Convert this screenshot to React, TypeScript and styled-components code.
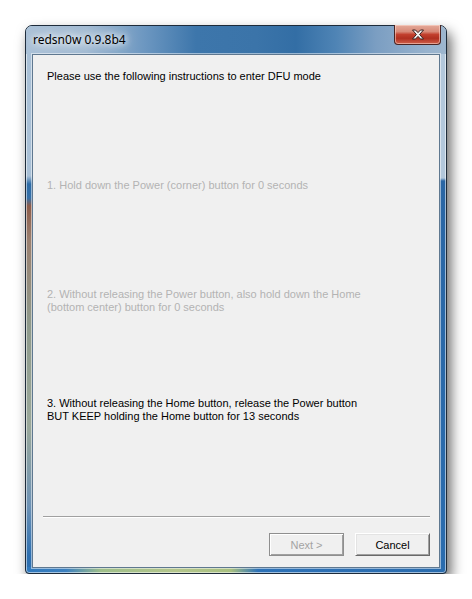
import React from 'react'
import styled, { createGlobalStyle } from 'styled-components'

const GlobalStyle = createGlobalStyle`
  html, body {
    margin: 0;
    background: #ffffff;
  }
  body {
    font-family: "Liberation Sans", Arial, sans-serif;
  }
`

const Window = styled.div`
  margin: 25px 0 0 25px;
  width: 422px;
  height: 549px;
  box-sizing: border-box;
  display: flex;
  flex-direction: column;
  border: 1px solid #1d2b3a;
  border-radius: 7px 7px 4px 4px;
  box-shadow: 4px 7px 13px rgba(0, 0, 0, 0.6), inset 0 0 0 1px rgba(255, 255, 255, 0.55);
  background:
    linear-gradient(90deg, #2f78bd 0, #3c80bf 40px, #9fbf8a 75px, #b4c68c 150px, #a8c080 205px, #2d72b8 232px, #2a6cae 100%) left bottom / 100% 6px no-repeat,
    linear-gradient(180deg, #a9c0d6 0, #a9c0d6 150px, #2e6ca6 158px, #3570a8 172px, #8c5c4a 180px, #9a8070 215px, #8e9a8c 300px, #9aa89a 400px, #6d92b5 480px, #2d6fb0 530px) left top / 7px 100% no-repeat,
    linear-gradient(180deg, #b2c7db 0, #b2c7db 152px, #2a66a4 155px, #2a6cae 100%) right top / 7px 100% no-repeat,
    #5f8fbf;
`

const TitleBar = styled.div`
  height: 28px;
  flex: none;
  display: flex;
  align-items: flex-start;
  padding: 0 5px 0 7px;
  border-radius: 6px 6px 0 0;
  background:
    linear-gradient(90deg, #aac1d7 0, #a2bbd3 60px, #6b96c0 120px, #3d76ab 170px, #3b74a9 230px, #336ea5 270px, #4f84b5 310px, #7b9ec2 350px, #97b2cd 400px, #9db6ce 100%);
`

const Title = styled.div`
  height: 28px;
  line-height: 28px;
  font-family: "Noto Sans", "Liberation Sans", sans-serif;
  font-size: 12px;
  color: #000;
  padding: 0 6px 0 0;
  text-shadow: 0 0 6px #ffffff, 0 0 10px rgba(255, 255, 255, 0.9), 0 0 14px rgba(255, 255, 255, 0.8);
`

const CloseButton = styled.div`
  margin-left: auto;
  margin-top: -1px;
  width: 47px;
  height: 20px;
  box-sizing: border-box;
  display: flex;
  align-items: center;
  justify-content: center;
  border: 1px solid #4a2422;
  border-top: none;
  border-radius: 0 0 4px 4px;
  box-shadow: inset 0 0 0 1px rgba(255, 220, 210, 0.55);
  background: linear-gradient(180deg, #e4aa9a 0, #d88a78 35%, #c2402e 50%, #b03020 70%, #d0604a 100%);
`

const Client = styled.div`
  flex: 1;
  margin: 0 6px 5px 6px;
  display: flex;
  flex-direction: column;
  background: #f0f0f0;
  border: 1px solid #5f7890;
  box-shadow: 0 0 0 1px rgba(255, 255, 255, 0.5);
`

const Instructions = styled.div`
  padding: 15px 14px 0 14px;
  display: flex;
  flex-direction: column;
`

const Step = styled.div<{ $disabled?: boolean }>`
  height: 109px;
  font-size: 11px;
  line-height: 13px;
  color: ${(p) => (p.$disabled ? '#b3b3b3' : '#000000')};
`

const Footer = styled.div`
  margin-top: auto;
  padding: 0 9px 11px 10px;
  display: flex;
  flex-direction: column;
`

const Separator = styled.div`
  height: 0;
  border-top: 1px solid #a0a0a0;
  border-bottom: 1px solid #ffffff;
  margin-bottom: 15px;
`

const ButtonRow = styled.div`
  display: flex;
  justify-content: flex-end;
  gap: 11px;
`

const Button = styled.div<{ $disabled?: boolean }>`
  width: 75px;
  height: 23px;
  box-sizing: border-box;
  display: flex;
  align-items: center;
  justify-content: center;
  font-size: 11px;
  background: #f0f0f0;
  color: ${(p) => (p.$disabled ? '#a3a3a3' : '#000000')};
  border: 1px solid ${(p) => (p.$disabled ? '#8f8f8f' : '#ffffff')};
  border-right-color: ${(p) => (p.$disabled ? '#8f8f8f' : '#696969')};
  border-bottom-color: ${(p) => (p.$disabled ? '#8f8f8f' : '#696969')};
  box-shadow: ${(p) =>
    p.$disabled
      ? 'inset 1px 1px #ffffff, inset -1px -1px #a0a0a0'
      : 'inset 1px 1px #e3e3e3, inset -1px -1px #a0a0a0'};
`

function CloseGlyph() {
  return (
    <svg width="14" height="11" viewBox="0 0 14 11">
      <path
        d="M1.5 1 H4.5 L7 3.6 L9.5 1 H12.5 L8.6 5.5 L12.5 10 H9.5 L7 7.4 L4.5 10 H1.5 L5.4 5.5 Z"
        fill="#f4f4f4"
        stroke="#3a2020"
        strokeWidth="1"
        strokeLinejoin="round"
      />
    </svg>
  )
}

export default function App() {
  return (
    <>
      <GlobalStyle />
      <Window>
        <TitleBar>
          <Title>redsn0w 0.9.8b4</Title>
          <CloseButton>
            <CloseGlyph />
          </CloseButton>
        </TitleBar>
        <Client>
          <Instructions>
            <Step>Please use the following instructions to enter DFU mode</Step>
            <Step $disabled>1. Hold down the Power (corner) button for 0 seconds</Step>
            <Step $disabled>
              2. Without releasing the Power button, also hold down the Home
              <br />
              (bottom center) button for 0 seconds
            </Step>
            <Step>
              3. Without releasing the Home button, release the Power button
              <br />
              BUT KEEP holding the Home button for 13 seconds
            </Step>
          </Instructions>
          <Footer>
            <Separator />
            <ButtonRow>
              <Button $disabled>Next &gt;</Button>
              <Button>Cancel</Button>
            </ButtonRow>
          </Footer>
        </Client>
      </Window>
    </>
  )
}
